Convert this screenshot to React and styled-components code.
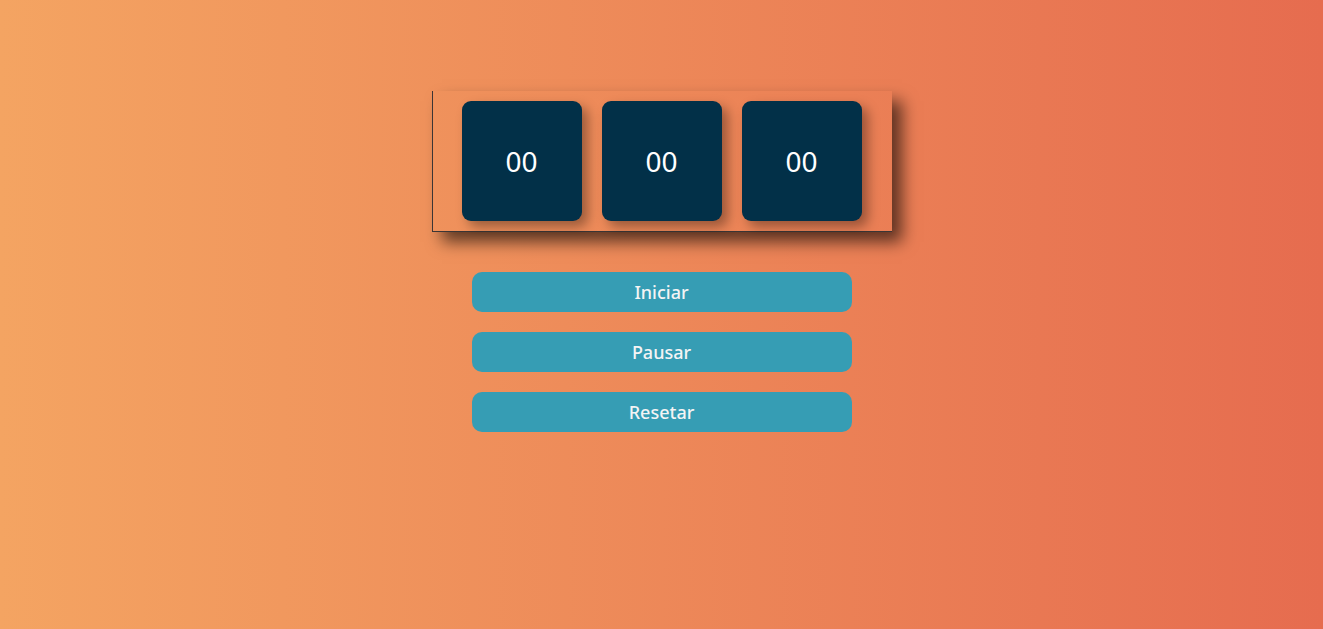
import styled, { createGlobalStyle } from "styled-components";

const Global = createGlobalStyle`
  * { box-sizing: border-box; }
  html, body {
    margin: 0;
    min-height: 100vh;
  }
  body {
    background: linear-gradient(to right, #f4a462, #e66c4f);
    font-family: "Noto Sans", "Open Sans", sans-serif;
  }
`;

const Pagina = styled.main`
  display: flex;
  flex-direction: column;
  align-items: center;
  padding-top: 91px;
  min-height: 100vh;
`;

const Relogio = styled.div`
  display: flex;
  gap: 20px;
  padding: 10px 30px 10px 29px;
  border-left: 1px solid #3b3535;
  border-bottom: 1px solid #3b3535;
  box-shadow: 10px 10px 15px rgba(0, 0, 0, 0.6);
`;

const Digito = styled.div`
  width: 120px;
  height: 120px;
  display: flex;
  align-items: center;
  justify-content: center;
  background: #023048;
  border-radius: 9px;
  color: #ffffff;
  font-size: 28px;
  box-shadow: 6px 6px 12px rgba(0, 0, 0, 0.35);
`;

const Botoes = styled.div`
  display: flex;
  flex-direction: column;
  gap: 20px;
  margin-top: 40px;
`;

const Botao = styled.button`
  width: 380px;
  height: 40px;
  border: none;
  border-radius: 10px;
  background: #369db4;
  color: #f4f4f4;
  font-family: "Noto Sans", "Open Sans", sans-serif;
  font-size: 18px;
  font-weight: 500;
  cursor: pointer;
`;

const App = () => {
  return (
    <>
      <Global />
      <Pagina>
        <Relogio>
          <Digito>00</Digito>
          <Digito>00</Digito>
          <Digito>00</Digito>
        </Relogio>
        <Botoes>
          <Botao>Iniciar</Botao>
          <Botao>Pausar</Botao>
          <Botao>Resetar</Botao>
        </Botoes>
      </Pagina>
    </>
  );
};

export default App;
